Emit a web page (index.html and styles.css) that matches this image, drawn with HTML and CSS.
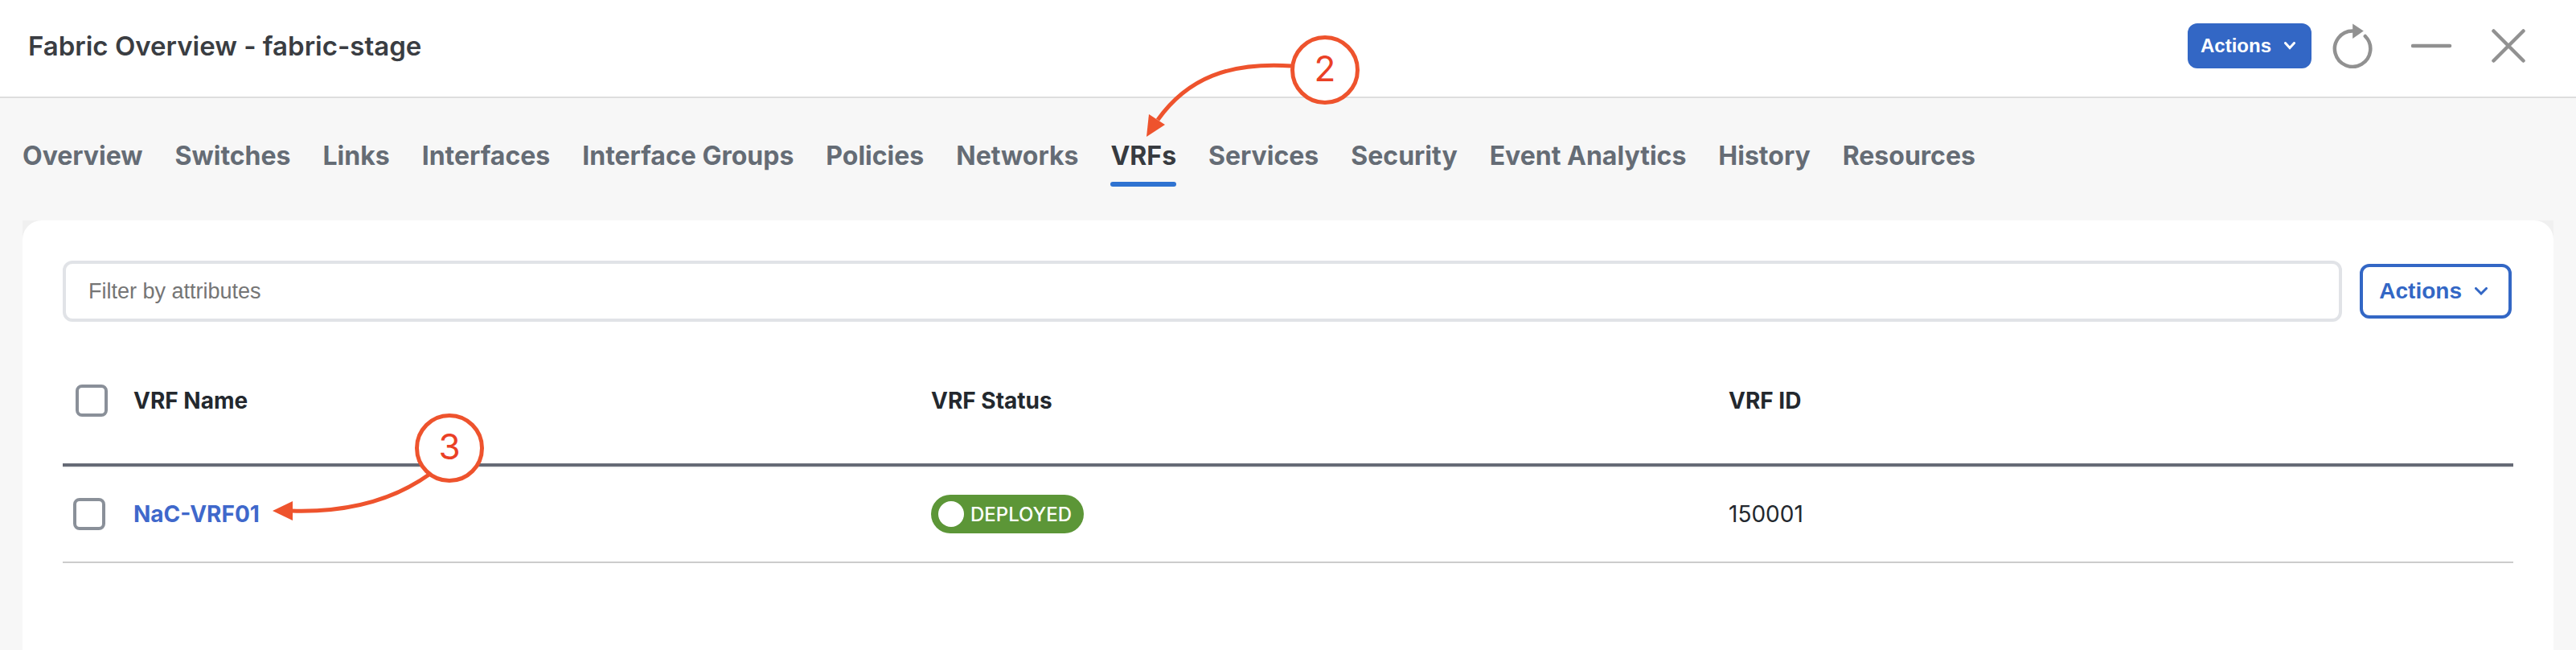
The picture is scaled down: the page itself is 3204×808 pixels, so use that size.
FILE: index.html
```html
<!DOCTYPE html>
<html lang="en">
<head>
    <meta charset="UTF-8">
    <meta name="viewport" content="width=device-width, initial-scale=1.0">
    <title>Fabric Overview - fabric-stage</title>
    <link rel="stylesheet" href="styles.css">
</head>
<body>

<header class="header">
    <h1>Fabric Overview - fabric-stage</h1>
    <div class="header-tools">
        <button class="btn btn-primary" type="button">
            Actions
            <svg class="chevron" width="14" height="10" viewBox="0 0 14 10"><path d="M1.5 1.5 7 7.5l5.5-6"/></svg>
        </button>
        <button class="icon-btn" type="button" aria-label="Refresh">
            <svg width="50" height="56" viewBox="0 0 50 56">
                <path class="line" d="M25 9.5A22.2 22.2 0 1 0 40.8 16"/>
                <path class="solid" d="M25.2 0.5 38.8 9.6 25.2 19z"/>
            </svg>
        </button>
        <button class="icon-btn" type="button" aria-label="Minimize">
            <svg width="52" height="56" viewBox="0 0 52 56"><path class="line" d="M2 28h46"/></svg>
        </button>
        <button class="icon-btn" type="button" aria-label="Close">
            <svg width="42" height="56" viewBox="0 0 42 56"><path class="line" d="M2.5 9.5l37 37M39.5 9.5l-37 37"/></svg>
        </button>
    </div>
</header>

<nav class="tabs">
    <a href="#overview">Overview</a>
    <a href="#switches">Switches</a>
    <a href="#links">Links</a>
    <a href="#interfaces">Interfaces</a>
    <a href="#interface-groups">Interface Groups</a>
    <a href="#policies">Policies</a>
    <a href="#networks">Networks</a>
    <a class="active" href="#vrfs">VRFs
        <svg class="callout callout-tab" width="270" height="130" viewBox="0 0 270 130">
            <path class="callout-line" d="M182 40C105 35 53 55 16 107"/>
            <path class="callout-head" d="M2 128 5 100 25 113z"/>
            <circle cx="224" cy="45" r="40.5"/>
            <text x="224" y="59">2</text>
        </svg>
    </a>
    <a href="#services">Services</a>
    <a href="#security">Security</a>
    <a href="#event-analytics">Event Analytics</a>
    <a href="#history">History</a>
    <a href="#resources">Resources</a>
</nav>

<main class="panel-wrap">
    <div class="panel">
        <div class="toolbar">
            <input class="filter" type="text" placeholder="Filter by attributes" aria-label="Filter by attributes">
            <button class="btn btn-outline" type="button">
                Actions
                <svg class="chevron" width="16" height="10" viewBox="0 0 16 10"><path d="M1.5 1.5 8 8l6.5-6.5"/></svg>
            </button>
        </div>
        <table>
            <thead>
                <tr>
                    <th class="select"><input type="checkbox" aria-label="Select all"></th>
                    <th>VRF Name</th>
                    <th>VRF Status</th>
                    <th>VRF ID</th>
                </tr>
            </thead>
            <tbody>
                <tr>
                    <td class="select"><input type="checkbox" aria-label="Select NaC-VRF01"></td>
                    <td>
                        <a class="vrf-link" href="#nac-vrf01">NaC-VRF01
                            <svg class="callout callout-row" width="270" height="140" viewBox="0 0 270 140">
                                <path class="callout-line" d="M196 79C150 112 92 127 24 125"/>
                                <path class="callout-head" d="M0 125 25 113v24z"/>
                                <circle cx="220" cy="47" r="40.5"/>
                                <text x="220" y="61">3</text>
                            </svg>
                        </a>
                    </td>
                    <td><span class="badge">DEPLOYED</span></td>
                    <td>150001</td>
                </tr>
            </tbody>
        </table>
    </div>
</main>

</body>
</html>
```
FILE: styles.css
```css
* {
    box-sizing: border-box;
}
body {
    margin: 0;
    min-height: 100vh;
    display: flex;
    flex-direction: column;
    font-family: Inter, sans-serif;
    font-size: 28px;
    background: #f7f7f7;
    color: #23282e;
}
.header {
    display: flex;
    align-items: center;
    justify-content: space-between;
    height: 122px;
    padding: 0 63px 6px 35px;
    background: white;
    border-bottom: 2px solid #dedede;
}
h1 {
    margin: 0;
    font-size: 33px;
    font-weight: 600;
    color: #3a3d42;
}
.header-tools {
    display: flex;
    align-items: center;
}
.btn {
    display: flex;
    align-items: center;
    font-family: "Liberation Sans", Arial, sans-serif;
    font-weight: bold;
    border-radius: 12px;
    cursor: pointer;
}
.btn-primary {
    height: 56px;
    padding: 0 20px 0 16px;
    gap: 16px;
    margin-right: 26px;
    font-size: 24px;
    color: white;
    background: #3367c5;
    border: none;
}
.btn-outline {
    height: 68px;
    padding: 0 26px 0 20px;
    gap: 16px;
    font-size: 28px;
    color: #3367c5;
    background: white;
    border: 4px solid #3367c5;
}
.chevron {
    fill: none;
    stroke: currentColor;
    stroke-width: 3;
    stroke-linecap: round;
}
.icon-btn {
    display: flex;
    padding: 0;
    border: none;
    background: none;
    cursor: pointer;
}
.icon-btn + .icon-btn {
    margin-left: 48px;
}
.icon-btn .line {
    fill: none;
    stroke: #919191;
    stroke-width: 4.5;
    stroke-linecap: round;
}
.icon-btn .solid {
    fill: #919191;
}
.tabs {
    display: flex;
    gap: 40px;
    padding: 52px 28px 42px;
}
.tabs a {
    position: relative;
    padding-bottom: 12px;
    font-size: 32px;
    line-height: 40px;
    font-weight: 700;
    color: #656c75;
    text-decoration: none;
    white-space: nowrap;
    border-bottom: 6px solid transparent;
}
.tabs .active {
    color: #373b40;
}
.tabs .active::after {
    content: "";
    position: absolute;
    left: 0;
    right: 0;
    bottom: -6px;
    height: 6px;
    border-radius: 3px;
    background: #2f73d1;
}
.panel-wrap {
    flex: 1;
    display: flex;
    margin: 0 28px;
    background: #f0f0f0;
}
.panel {
    flex: 1;
    padding: 50px;
    background: white;
    border-radius: 24px 24px 0 0;
}
.toolbar {
    display: flex;
    align-items: center;
    gap: 22px;
    padding-right: 2px;
}
.filter {
    flex: 1;
    height: 76px;
    padding: 0 28px;
    font-family: "Liberation Sans", Arial, sans-serif;
    font-size: 27px;
    border: 4px solid #e1e3e7;
    border-radius: 12px;
}
.filter::placeholder {
    color: #757575;
}
table {
    width: 100%;
    margin-top: 20px;
    table-layout: fixed;
    border-collapse: separate;
    border-spacing: 0;
}
th, td {
    padding: 0 0 0 16px;
    text-align: left;
    vertical-align: middle;
}
th {
    height: 160px;
    font-weight: 700;
    border-bottom: 4px solid #656a75;
}
td {
    height: 120px;
    padding-bottom: 2px;
    border-top: 2px solid #f2f2f2;
    border-bottom: 2px solid #cccccc;
}
.select {
    width: 72px;
}
td.select {
    padding-left: 13px;
}
input[type="checkbox"] {
    display: block;
    appearance: none;
    width: 40px;
    height: 40px;
    margin: 0;
    background: white;
    border: 4px solid #8a9099;
    border-radius: 8px;
}
.vrf-link {
    position: relative;
    font-weight: 700;
    color: #3f68cb;
    text-decoration: none;
}
.badge {
    display: inline-flex;
    align-items: center;
    gap: 8px;
    height: 48px;
    padding: 0 15px 0 9px;
    font-size: 24px;
    font-weight: 500;
    color: white;
    background: #5c9637;
    border-radius: 24px;
    vertical-align: middle;
}
.badge::before {
    content: "";
    width: 32px;
    height: 32px;
    border-radius: 50%;
    background: white;
}
/* numbered step markers */
.callout {
    position: absolute;
    z-index: 1;
    pointer-events: none;
}
.callout-tab {
    left: 43px;
    bottom: 54px;
}
.callout-row {
    left: 173px;
    bottom: 6px;
}
.callout-line {
    fill: none;
    stroke: #ee532d;
    stroke-width: 5;
}
.callout-head {
    fill: #ee532d;
}
.callout circle {
    fill: white;
    stroke: #ee532d;
    stroke-width: 5;
}
.callout text {
    font-size: 44px;
    font-weight: 400;
    text-anchor: middle;
    fill: #ea4025;
}
```
